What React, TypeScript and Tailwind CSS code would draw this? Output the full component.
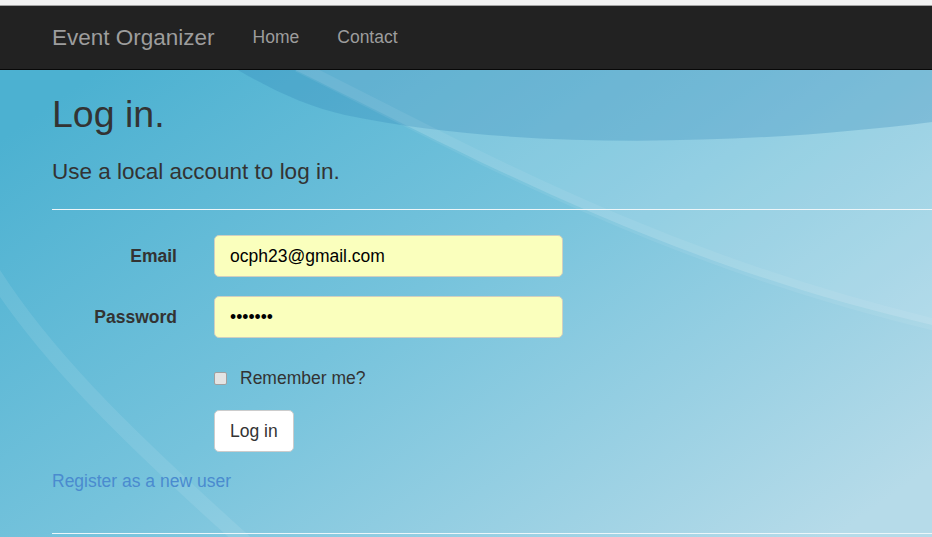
import React from 'react';

const Background: React.FC = () => (
  <svg
    className="absolute inset-0 w-full h-full"
    viewBox="0 0 932 467"
    preserveAspectRatio="none"
  >
    <defs>
      <linearGradient id="bg" x1="0" y1="0.15" x2="1" y2="0.85">
        <stop offset="0" stopColor="#4cb1d1" />
        <stop offset="0.45" stopColor="#76c3dc" />
        <stop offset="1" stopColor="#b6dbe9" />
      </linearGradient>
    </defs>
    <rect x="0" y="0" width="932" height="467" fill="url(#bg)" />
    {/* light region above the big arc */}
    <path d="M 295 0 C 450 75, 650 190, 932 255 L 932 0 Z" fill="#ffffff" opacity="0.15" />
    {/* darker band at top */}
    <path
      d="M 238 0 C 272 20, 308 37, 345 45 C 520 82, 760 74, 932 52 L 932 0 Z"
      fill="#2f86b6"
      opacity="0.28"
    />
    {/* light streak along the arc */}
    <path
      d="M 298 -4 C 452 72, 652 188, 940 256"
      fill="none"
      stroke="#ffffff"
      strokeWidth="12"
      opacity="0.07"
    />
    {/* light arc bottom left */}
    <path
      d="M -12 195 C 40 280, 120 360, 245 472"
      fill="none"
      stroke="#ffffff"
      strokeWidth="15"
      opacity="0.09"
    />
  </svg>
);

const App: React.FC = () => {
  return (
    <div className="w-[932px] h-[537px] overflow-hidden font-['Liberation_Sans',Arial,sans-serif] text-[#333]">
      <div className="h-[6px] bg-[#f2f2f2] border-b border-[#a3a3a3]"></div>

      {/* Navbar */}
      <nav className="h-[64px] bg-[#222] border-b border-[#080808] flex items-center pl-[52px]">
        <a className="text-[22.5px] text-[#9d9d9d] mr-[38px]">Event Organizer</a>
        <ul className="flex gap-[38px] text-[17.5px] text-[#9d9d9d]">
          <li>Home</li>
          <li>Contact</li>
        </ul>
      </nav>

      <main className="relative h-[467px] overflow-hidden">
        <Background />
        <div className="relative pl-[52px]">
          <h2 className="mt-[24px] text-[37.5px] leading-[41px] font-normal">Log in.</h2>
          <h4 className="mt-[24px] text-[22.5px] leading-[25px] font-normal">
            Use a local account to log in.
          </h4>
          <hr className="mt-[25px] border-0 border-t border-[#eef6f9]" />

          <form className="mt-[25px] flex flex-col gap-[19px]">
            <div className="flex items-center">
              <label className="w-[125px] mr-[37px] text-right font-bold text-[17.5px]">Email</label>
              <input
                readOnly
                value="ocph23@gmail.com"
                className="w-[349px] h-[42px] px-[15px] rounded-[5px] border border-[#cfcfc0] bg-[#faffbd] text-[17.5px] text-black outline-none"
              />
            </div>
            <div className="flex items-center">
              <label className="w-[125px] mr-[37px] text-right font-bold text-[17.5px]">Password</label>
              <div className="w-[349px] h-[42px] px-[15px] rounded-[5px] border border-[#cfcfc0] bg-[#faffbd] text-[17.5px] text-black flex items-center">
                •••••••
              </div>
            </div>
            <div className="ml-[162px] pt-[9px] flex items-center h-[34px] leading-[25px]">
              <span className="w-[13px] h-[13px] rounded-[2px] border border-[#a0a0a0] bg-[#e4e4e4] mr-[13px]"></span>
              <span className="text-[17.5px]">Remember me?</span>
            </div>
            <div className="ml-[162px]">
              <button
                type="button"
                className="h-[42px] px-[15px] bg-white border border-[#ccc] rounded-[5px] text-[17.5px] text-[#333]"
              >
                Log in
              </button>
            </div>
          </form>

          <p className="mt-[17px] leading-[25px] text-[17.5px] text-[#4a8bcf]">Register as a new user</p>
          <hr className="mt-[39px] border-0 border-t border-[#eef6f9]" />
        </div>
      </main>
    </div>
  );
};

export default App;
